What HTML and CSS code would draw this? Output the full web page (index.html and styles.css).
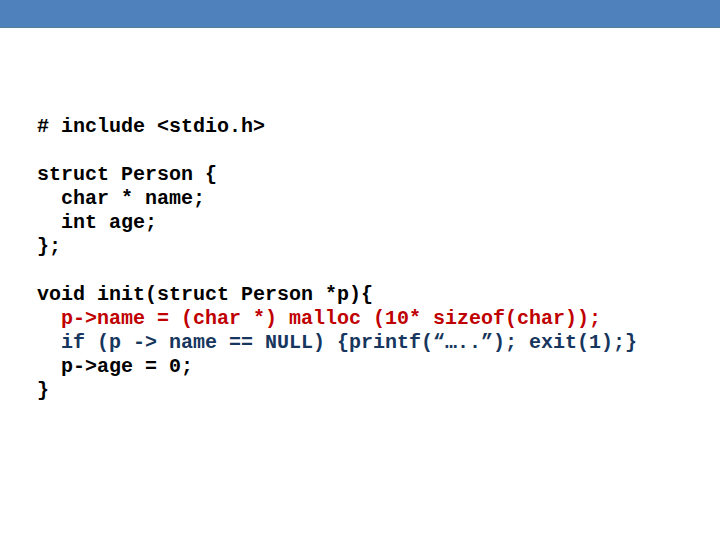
FILE: index.html
```html
<!DOCTYPE html>
<html>
<head>
<meta charset="utf-8">
<link rel="stylesheet" href="styles.css">
</head>
<body>
<div class="topbar"></div>
<pre class="code"># include &lt;stdio.h&gt;

struct Person {
  char * name;
  int age;
};

void init(struct Person *p){
<span class="red">  p-&gt;name = (char *) malloc (10* sizeof(char));</span>
<span class="navy">  if (p -&gt; name == NULL) {printf(“…..”); exit(1);}</span>
  p-&gt;age = 0;
}</pre>
</body>
</html>
```
FILE: styles.css
```css
html, body {
  margin: 0;
  padding: 0;
  background: #ffffff;
  width: 720px;
  height: 540px;
  overflow: hidden;
}
.topbar {
  height: 28px;
  background: #4f81bd;
  border-bottom: 1px solid #5a7f98;
  box-sizing: border-box;
}
.code {
  margin: 87px 0 0 37px;
  font-family: "Liberation Mono", "Courier New", monospace;
  font-weight: bold;
  font-size: 20px;
  line-height: 24px;
  color: #000000;
}
.red {
  color: #c00000;
}
.navy {
  color: #17365d;
}
```
